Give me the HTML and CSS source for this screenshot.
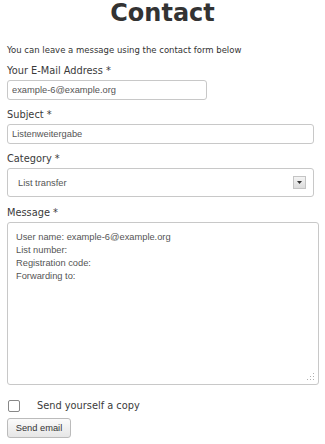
FILE: index.html
```html
<!DOCTYPE html>
<html>
<head>
<meta charset="utf-8">
<link rel="stylesheet" href="styles.css">
</head>
<body>
<div class="page">
  <h1 class="title">Contact</h1>
  <p class="intro">You can leave a message using the contact form below</p>
  <div class="field">
    <label class="label">Your E-Mail Address *</label>
    <input class="input input-short" type="text" value="example-6@example.org">
  </div>
  <div class="field">
    <label class="label">Subject *</label>
    <input class="input input-wide" type="text" value="Listenweitergabe">
  </div>
  <div class="field">
    <label class="label">Category *</label>
    <div class="select">
      <span class="select-text">List transfer</span>
      <span class="select-btn"><svg width="5" height="3" viewBox="0 0 5 3"><path d="M0 0H5L2.5 3Z" fill="#333"/></svg></span>
    </div>
  </div>
  <div class="field field-msg">
    <label class="label">Message *</label>
    <div class="ta-wrap">
      <textarea class="textarea">User name: example-6@example.org
List number:
Registration code:
Forwarding to:</textarea>
      <svg class="grip" width="8" height="8" viewBox="0 0 8 8">
        <g fill="#b0b0b0">
          <rect x="6" y="0" width="1" height="1"/>
          <rect x="6" y="3" width="1" height="1"/>
          <rect x="3" y="3" width="1" height="1"/>
          <rect x="6" y="6" width="1" height="1"/>
          <rect x="3" y="6" width="1" height="1"/>
          <rect x="0" y="6" width="1" height="1"/>
        </g>
      </svg>
    </div>
  </div>
  <div class="copy-row">
    <span class="checkbox"></span>
    <span class="copy-label">Send yourself a copy</span>
  </div>
  <button class="btn">Send email</button>
</div>
</body>
</html>
```
FILE: styles.css
```css
html, body {
  margin: 0;
  padding: 0;
  background: #fff;
}
.page {
  padding: 0 7px;
  font-family: "DejaVu Sans", Verdana, sans-serif;
  color: #333;
}
.title {
  margin: 0;
  text-align: center;
  font-family: "DejaVu Sans", Verdana, sans-serif;
  font-weight: bold;
  font-size: 24px;
  line-height: 26px;
  color: #333;
}
.intro {
  margin: 18px 0 0;
  font-size: 8.5px;
  line-height: 12px;
  color: #333;
}
.field {
  display: flex;
  flex-direction: column;
  align-items: flex-start;
  margin-top: 8px;
}
.label {
  font-size: 9.8px;
  line-height: 14px;
  color: #3a3a3a;
  margin-bottom: 2px;
}
.input {
  box-sizing: border-box;
  height: 20px;
  margin: 0;
  padding: 0 4px;
  border: 1px solid #c8c8c8;
  border-radius: 3px;
  font-family: "Liberation Sans", Arial, sans-serif;
  font-size: 9.3px;
  color: #555;
  background: #fff;
  outline: none;
}
.input-short { width: 200px; }
.input-wide { width: 307px; }
.select {
  box-sizing: border-box;
  width: 307px;
  height: 29px;
  border: 1px solid #c8c8c8;
  border-radius: 3px;
  display: flex;
  align-items: center;
  justify-content: space-between;
  padding: 0 7px 0 10px;
  font-family: "Liberation Sans", Arial, sans-serif;
  font-size: 9.3px;
  color: #555;
}
.select-btn {
  box-sizing: border-box;
  width: 13px;
  height: 13px;
  border: 1px solid #c4c4c4;
  background: linear-gradient(#f4f4f4, #dcdcdc);
  display: flex;
  align-items: center;
  justify-content: center;
}
.field-msg { margin-top: 9px; }
.ta-wrap {
  position: relative;
  width: 312px;
}
.textarea {
  display: block;
  box-sizing: border-box;
  width: 312px;
  height: 163px;
  margin: 0;
  padding: 8px 8px;
  border: 1px solid #c8c8c8;
  border-radius: 3px;
  font-family: "Liberation Sans", Arial, sans-serif;
  font-size: 9.3px;
  line-height: 13px;
  color: #555;
  resize: none;
  outline: none;
}
.grip {
  position: absolute;
  right: 4px;
  bottom: 4px;
}
.copy-row {
  display: flex;
  align-items: center;
  margin-top: 14px;
  height: 13px;
}
.checkbox {
  box-sizing: border-box;
  width: 12px;
  height: 12px;
  margin-left: 1px;
  border: 1px solid #888;
  border-radius: 2px;
  background: #fff;
}
.copy-label {
  margin-left: 17px;
  font-size: 9.8px;
  color: #3a3a3a;
}
.btn {
  display: block;
  margin-top: 6px;
  box-sizing: border-box;
  width: 64px;
  height: 20px;
  padding: 0;
  border: 1px solid #bbb;
  border-radius: 3px;
  background: linear-gradient(#fbfbfb, #e6e6e6);
  font-family: "Liberation Sans", Arial, sans-serif;
  font-size: 9.3px;
  color: #333;
}
```
